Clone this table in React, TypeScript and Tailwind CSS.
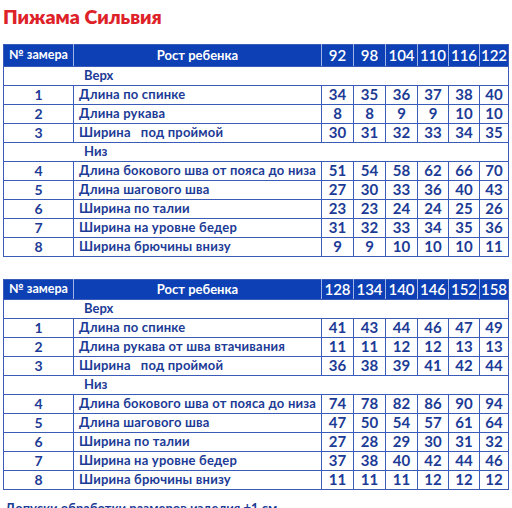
type Row = { n?: string; label: string; v?: number[] };

const table1: { sizes: number[]; rows: Row[] } = {
  sizes: [92, 98, 104, 110, 116, 122],
  rows: [
    { label: "Верх" },
    { n: "1", label: "Длина по спинке", v: [34, 35, 36, 37, 38, 40] },
    { n: "2", label: "Длина рукава", v: [8, 8, 9, 9, 10, 10] },
    { n: "3", label: "Ширина\u00a0\u00a0\u00a0под проймой", v: [30, 31, 32, 33, 34, 35] },
    { label: "Низ" },
    { n: "4", label: "Длина бокового шва от пояса до низа", v: [51, 54, 58, 62, 66, 70] },
    { n: "5", label: "Длина шагового шва", v: [27, 30, 33, 36, 40, 43] },
    { n: "6", label: "Ширина по талии", v: [23, 23, 24, 24, 25, 26] },
    { n: "7", label: "Ширина на уровне бедер", v: [31, 32, 33, 34, 35, 36] },
    { n: "8", label: "Ширина брючины внизу", v: [9, 9, 10, 10, 10, 11] },
  ],
};

const table2: { sizes: number[]; rows: Row[] } = {
  sizes: [128, 134, 140, 146, 152, 158],
  rows: [
    { label: "Верх" },
    { n: "1", label: "Длина по спинке", v: [41, 43, 44, 46, 47, 49] },
    { n: "2", label: "Длина рукава от шва втачивания", v: [11, 11, 12, 12, 13, 13] },
    { n: "3", label: "Ширина\u00a0\u00a0\u00a0под проймой", v: [36, 38, 39, 41, 42, 44] },
    { label: "Низ" },
    { n: "4", label: "Длина бокового шва от пояса до низа", v: [74, 78, 82, 86, 90, 94] },
    { n: "5", label: "Длина шагового шва", v: [47, 50, 54, 57, 61, 64] },
    { n: "6", label: "Ширина по талии", v: [27, 28, 29, 30, 31, 32] },
    { n: "7", label: "Ширина на уровне бедер", v: [37, 38, 40, 42, 44, 46] },
    { n: "8", label: "Ширина брючины внизу", v: [11, 11, 11, 12, 12, 12] },
  ],
};

function SizeTable({ sizes, rows, headH }: { sizes: number[]; rows: Row[]; headH: string }) {
  return (
    <table className="w-[505px] table-fixed border-collapse border border-[#3a5cb8] text-[#1c3b96] leading-none">
      <colgroup>
        <col className="w-[70px]" />
        <col className="w-[248px]" />
        <col className="w-[32px]" />
        <col className="w-[32px]" />
        <col className="w-[32px]" />
        <col className="w-[31px]" />
        <col className="w-[31px]" />
        <col className="w-[29px]" />
      </colgroup>
      <thead>
        <tr className={`${headH} bg-[#0c40b4] text-white font-bold`}>
          <th className="border border-[#3a5cb8] border-r-[#9fb3e6] text-[12.5px] p-0 whitespace-nowrap">№ замера</th>
          <th className="border border-[#3a5cb8] border-r-[#9fb3e6] text-[13px] p-0">Рост ребенка</th>
          {sizes.map((s, i) => (
            <th
              key={s}
              className={`border border-[#3a5cb8] text-[15px] font-semibold p-0 ${i < sizes.length - 1 ? "border-r-[#9fb3e6]" : ""}`}
            >
              {s}
            </th>
          ))}
        </tr>
      </thead>
      <tbody>
        {rows.map((r, i) =>
          r.v ? (
            <tr key={i} className="h-[19px]">
              <td className="border border-[#3a5cb8] text-center text-[14px] font-bold p-0">{r.n}</td>
              <td className="border border-[#3a5cb8] text-[13px] font-bold pl-[5px] p-0 whitespace-nowrap tracking-[0.2px]">
                {r.label}
              </td>
              {r.v.map((x, j) => (
                <td key={j} className="border border-[#3a5cb8] text-center text-[15px] font-bold p-0">
                  {x}
                </td>
              ))}
            </tr>
          ) : (
            <tr key={i} className="h-[19px]">
              <td colSpan={8} className="border border-[#3a5cb8] text-[13px] font-bold p-0 pl-[80px]">
                {r.label}
              </td>
            </tr>
          )
        )}
      </tbody>
    </table>
  );
}

export default function App() {
  return (
    <div className="w-[512px] h-[508px] overflow-hidden bg-white px-[3px] font-['Lato','Open_Sans',sans-serif]">
      <h1 className="text-[19.5px] font-extrabold text-[#de2229] leading-none pt-[7px]">Пижама Сильвия</h1>
      <div className="mt-[17px]">
        <SizeTable sizes={table1.sizes} rows={table1.rows} headH="h-[22px]" />
      </div>
      <div className="mt-[22px]">
        <SizeTable sizes={table2.sizes} rows={table2.rows} headH="h-[20px]" />
      </div>
      <p className="mt-[12px] pl-[2px] text-[13px] leading-none font-bold text-[#1c3b96] whitespace-nowrap">
        Допуски обработки размеров изделия ±1 см
      </p>
    </div>
  );
}
